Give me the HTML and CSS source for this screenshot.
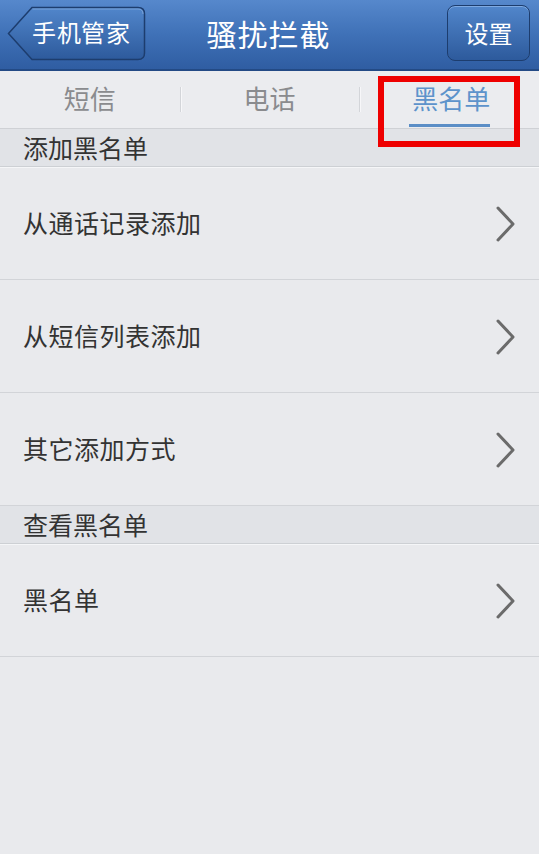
FILE: index.html
```html
<!DOCTYPE html>
<html lang="zh-CN">
<head>
<meta charset="utf-8">
<title>骚扰拦截</title>
<link rel="stylesheet" href="styles.css">
</head>
<body>
<div class="app">
  <header class="topbar">
    <div class="left">
      <button class="back">
        <svg class="back-shape" width="139" height="55" viewBox="0 0 139 55">
          <defs>
            <linearGradient id="bg1" x1="0" y1="0" x2="0" y2="1">
              <stop offset="0" stop-color="#5186cb"/>
              <stop offset="1" stop-color="#2d5a9c"/>
            </linearGradient>
          </defs>
          <path d="M25 1.5 H131 Q137.5 1.5 137.5 8 V47 Q137.5 53.5 131 53.5 H25 L1.5 27.5 Z" fill="url(#bg1)" stroke="#1d3d6e" stroke-width="1.5"/>
          <path d="M25.5 3 H131 Q136 3 136 8" fill="none" stroke="#8db1e0" stroke-width="1" opacity="0.7"/>
        </svg>
        <span class="back-label">手机管家</span>
      </button>
    </div>
    <h1 class="title">骚扰拦截</h1>
    <div class="right">
      <button class="settings">设置</button>
    </div>
  </header>

  <nav class="tabs">
    <div class="tab">短信</div>
    <div class="tab">电话</div>
    <div class="tab active"><span class="tab-label">黑名单</span></div>
    <div class="highlight"></div>
  </nav>

  <div class="section">添加黑名单</div>
  <div class="row"><span>从通话记录添加</span><svg class="chev" width="22" height="36" viewBox="0 0 22 36"><polyline points="3,2 18,18 3,34" fill="none" stroke="#6b6b6b" stroke-width="3" stroke-linecap="round" stroke-linejoin="round"/></svg></div>
  <div class="row"><span>从短信列表添加</span><svg class="chev" width="22" height="36" viewBox="0 0 22 36"><polyline points="3,2 18,18 3,34" fill="none" stroke="#6b6b6b" stroke-width="3" stroke-linecap="round" stroke-linejoin="round"/></svg></div>
  <div class="row"><span>其它添加方式</span><svg class="chev" width="22" height="36" viewBox="0 0 22 36"><polyline points="3,2 18,18 3,34" fill="none" stroke="#6b6b6b" stroke-width="3" stroke-linecap="round" stroke-linejoin="round"/></svg></div>

  <div class="section">查看黑名单</div>
  <div class="row"><span>黑名单</span><svg class="chev" width="22" height="36" viewBox="0 0 22 36"><polyline points="3,2 18,18 3,34" fill="none" stroke="#6b6b6b" stroke-width="3" stroke-linecap="round" stroke-linejoin="round"/></svg></div>
</div>
</body>
</html>
```

FILE: styles.css
```css
* { box-sizing: border-box; }
html, body {
  margin: 0;
  padding: 0;
  background: #e9eaed;
  font-family: "Noto Sans CJK SC", "Noto Sans", sans-serif;
}
.app {
  width: 539px;
  min-height: 854px;
  background: #e9eaed;
  position: relative;
}
.topbar {
  height: 71px;
  display: grid;
  grid-template-columns: 1fr auto 1fr;
  align-items: center;
  padding: 0 9px 0 7px;
  background: linear-gradient(to bottom, #5688cc 0%, #3f71b7 50%, #2f5da2 100%);
  border-bottom: 2px solid #234a85;
}
.left { display: flex; justify-content: flex-start; }
.right { display: flex; justify-content: flex-end; }
.back {
  display: grid;
  width: 139px;
  height: 55px;
  padding: 0;
  margin: 0 0 2px 0;
  border: 0;
  background: none;
}
.back-shape, .back-label { grid-area: 1 / 1; }
.back-label {
  align-self: center;
  justify-self: start;
  padding-left: 25px;
  color: #fff;
  font-size: 24px;
  line-height: 1;
  font-family: inherit;
  letter-spacing: 0.5px;
}
.title {
  margin: 0 0 4px 0;
  color: #fff;
  font-size: 30px;
  font-weight: normal;
  line-height: 1;
  letter-spacing: 1px;
}
.settings {
  width: 83px;
  height: 56px;
  margin: 0 0 3px 0;
  border: 1.5px solid #1d3d6e;
  border-radius: 8px;
  background: linear-gradient(to bottom, #5186cb, #2d5a9c);
  box-shadow: inset 0 1px 0 rgba(160, 195, 240, 0.6);
  color: #fff;
  font-family: inherit;
  font-size: 24px;
  line-height: 1;
  padding: 0;
}
.tabs {
  height: 58px;
  display: grid;
  grid-template-columns: 1fr 1fr 1fr;
  background: #ebecef;
  border-bottom: 1px solid #cfd1d5;
  position: relative;
}
.tab {
  display: flex;
  align-items: center;
  justify-content: center;
  font-size: 26px;
  color: #8a8b8e;
  padding-bottom: 4px;
  position: relative;
}
.tab + .tab::before {
  content: "";
  position: absolute;
  left: 0;
  top: 16px;
  width: 1px;
  height: 25px;
  background: #d3d5d9;
  box-shadow: 1px 0 0 #f7f7f9;
}
.tab.active { color: #5d93cb; }
.tab-label {
  position: relative;
  display: inline-block;
  padding-left: 4px;
}
.tab-label::after {
  content: "";
  position: absolute;
  left: 1px;
  width: 81px;
  top: 45px;
  height: 3px;
  background: #5b8ec6;
}
.highlight {
  position: absolute;
  left: 378px;
  top: 5px;
  width: 142px;
  height: 71px;
  border: 6px solid #ee0000;
  z-index: 2;
}
.section {
  height: 38px;
  background: #e1e3e7;
  border-bottom: 1px solid #cdd0d4;
  box-shadow: 0 1px 0 #f5f6f8;
  padding-left: 23px;
  font-size: 25px;
  color: #333;
  line-height: 37px;
  position: relative;
  z-index: 1;
}
.row {
  height: 113px;
  display: flex;
  align-items: center;
  justify-content: space-between;
  padding: 0 22px 0 23px;
  border-bottom: 1px solid #d2d4d8;
  font-size: 25px;
  color: #333;
  background: #e9eaed;
}
.row span { padding-bottom: 2px; letter-spacing: 0.5px; }
.chev { margin-top: 2px; }
```
